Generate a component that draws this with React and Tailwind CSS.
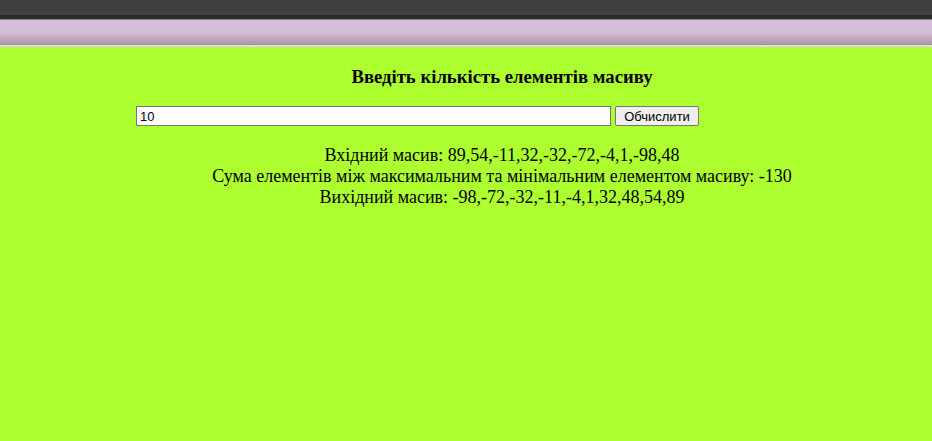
import React, { useState } from 'react';

const App = () => {
  const [count, setCount] = useState('10');

  return (
    <div className="min-h-[441px] bg-[#adff2f]" style={{ fontFamily: '"Liberation Serif", serif' }}>
      {/* browser bars */}
      <div className="h-[15px] bg-[#3f3f3f]" />
      <div className="h-[4px] bg-[#2b2b2b]" />
      <div className="h-[1px] bg-[#8a7a8a]" />
      <div className="h-[25px] bg-gradient-to-b from-[#d8c0d8] via-[#d6bed6] to-[#a894a8]" />
      <div className="h-[2px] bg-[#e4dce4]" />

      <div className="pl-[72px] text-center text-black">
        <h3 className="pt-[19px] text-[18.7px] font-bold leading-[22px]">Введіть кількість елементів масиву</h3>
      </div>

      <div className="mt-[18px] flex items-center gap-[4px] pl-[136px]">
        <input
          value={count}
          onChange={(e) => setCount(e.target.value)}
          className="h-[20px] w-[475px] border border-[#767676] bg-white px-[3px] text-[13px] text-black outline-none"
          style={{ fontFamily: '"Liberation Sans", Arial, sans-serif' }}
        />
        <button
          className="h-[20px] w-[84px] rounded-[2px] border border-[#767676] bg-[#efefef] text-[13px] text-black"
          style={{ fontFamily: '"Liberation Sans", Arial, sans-serif' }}
        >
          Обчислити
        </button>
      </div>

      <div className="mt-[19px] pl-[72px] text-center text-[18px] leading-[21px] text-black">
        <div>Вхідний масив: 89,54,-11,32,-32,-72,-4,1,-98,48</div>
        <div>Сума елементів між максимальним та мінімальним елементом масиву: -130</div>
        <div>Вихідний масив: -98,-72,-32,-11,-4,1,32,48,54,89</div>
      </div>
    </div>
  );
};

export default App;
